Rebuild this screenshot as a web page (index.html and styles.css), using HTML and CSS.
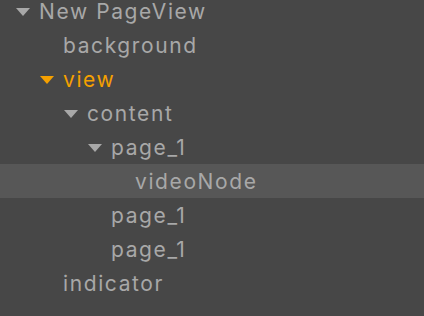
FILE: index.html
```html
<!DOCTYPE html>
<html>
<head>
<meta charset="utf-8">
<link rel="stylesheet" href="styles.css">
</head>
<body>
<ul class="tree">
  <li class="row l0"><span class="arrow"></span><span class="label">New PageView</span></li>
  <li class="row l1"><span class="label">background</span></li>
  <li class="row l1 active"><span class="arrow"></span><span class="label">view</span></li>
  <li class="row l2"><span class="arrow"></span><span class="label">content</span></li>
  <li class="row l3"><span class="arrow"></span><span class="label">page_1</span></li>
  <li class="row l4 selected"><span class="label">videoNode</span></li>
  <li class="row l3"><span class="label">page_1</span></li>
  <li class="row l3"><span class="label">page_1</span></li>
  <li class="row l1"><span class="label">indicator</span></li>
</ul>
</body>
</html>
```
FILE: styles.css
```css
html, body {
  margin: 0;
  padding: 0;
  background: #474747;
  height: 100%;
  overflow: hidden;
}
.tree {
  list-style: none;
  margin: -6px 0 0 0;
  padding: 0;
  font-family: Inter, "Noto Sans", sans-serif;
  font-size: 21px;
  letter-spacing: 1.6px;
  color: #a8a8a8;
}
.row {
  height: 34px;
  display: flex;
  align-items: center;
  padding-left: 39px;
  box-sizing: border-box;
}
.row.l1 { padding-left: 63px; }
.row.l2 { padding-left: 87px; }
.row.l3 { padding-left: 111px; }
.row.l4 { padding-left: 135px; }
.row.selected { background: #575757; }
.row.active { color: #f5a000; }
.arrow {
  width: 0;
  height: 0;
  border-left: 7px solid transparent;
  border-right: 7px solid transparent;
  border-top: 8px solid currentColor;
  margin: 2px 9px 0 -23px;
}
.label {
  line-height: 34px;
  padding-top: 2px;
}
```
